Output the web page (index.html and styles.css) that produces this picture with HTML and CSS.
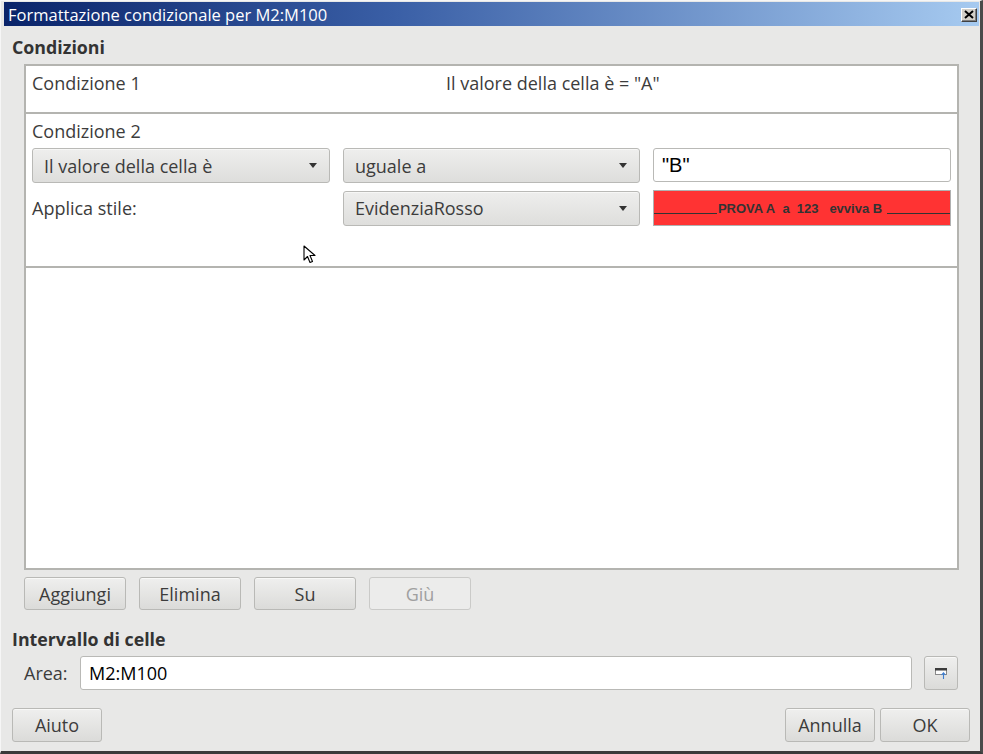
FILE: index.html
```html
<!DOCTYPE html>
<html>
<head>
  <title>Formattazione condizionale per M2:M100</title>
  <link rel="stylesheet" href="styles.css">
</head>
<body>
  <div class="window">
    <div class="titlebar">
      <span class="title">Formattazione condizionale per M2:M100</span>
      <button class="close-btn" aria-label="Chiudi">
        <svg width="10" height="9" viewBox="0 0 10 9">
          <path d="M1 1 L9 8 M9 1 L1 8" stroke="#000" stroke-width="2" fill="none"/>
        </svg>
      </button>
    </div>

    <div class="content">
      <h2 class="section-title">Condizioni</h2>

      <div class="cond-list">
        <div class="cond collapsed">
          <span class="cond-name">Condizione 1</span>
          <span class="cond-summary">Il valore della cella è = "A"</span>
        </div>

        <div class="cond expanded">
          <div class="cond-name">Condizione 2</div>
          <div class="cond-grid">
            <div class="combo"><span>Il valore della cella è</span><i class="arrow"></i></div>
            <div class="combo"><span>uguale a</span><i class="arrow"></i></div>
            <div class="entry entry-value">"B"</div>

            <div class="label">Applica stile:</div>
            <div class="combo"><span>EvidenziaRosso</span><i class="arrow"></i></div>
            <div class="preview">
              <span class="rule"></span>
              <span class="sample">PROVA A&nbsp; a&nbsp; 123 &nbsp; evviva B</span>
              <span class="rule"></span>
            </div>
          </div>
          <svg class="cursor" width="14" height="20" viewBox="0 0 14 20">
            <path d="M1 1 L1 15 L4.5 11.5 L7 17.5 L9.5 16.5 L7 10.5 L12 10.5 Z" fill="#fff" stroke="#000" stroke-width="1.1" stroke-linejoin="round"/>
          </svg>
        </div>
      </div>

      <div class="list-actions">
        <button class="btn">Aggiungi</button>
        <button class="btn">Elimina</button>
        <button class="btn">Su</button>
        <button class="btn" disabled>Giù</button>
      </div>

      <h2 class="section-title range-title">Intervallo di celle</h2>
      <div class="range-row">
        <label class="range-label" for="area">Area:</label>
        <div class="entry entry-area" id="area">M2:M100</div>
        <button class="btn shrink-btn" aria-label="Riduci">
          <svg width="14" height="16" viewBox="0 0 14 16">
            <rect x="1.5" y="3.5" width="11" height="6" fill="#fdfdfd" stroke="#8a8a8a"/>
            <rect x="1" y="3" width="12" height="2.5" fill="#3c3c3c"/>
            <path d="M9.5 14 L9.5 8 M7.5 10 L9.5 7.8 L11.5 10" stroke="#3f7fd0" stroke-width="1.1" fill="none"/>
          </svg>
        </button>
      </div>

      <div class="dialog-actions">
        <button class="btn">Aiuto</button>
        <div class="spacer"></div>
        <button class="btn">Annulla</button>
        <button class="btn">OK</button>
      </div>
    </div>
  </div>
</body>
</html>
```

FILE: styles.css
```css
:root {
  --bg: #e8e8e7;
  --text: #3c3c3c;
  --border: #b9b9b6;
  --list-border: #b4b4b0;
  --ui-font: 'Open Sans', 'Noto Sans', sans-serif;
}

html, body {
  margin: 0;
  padding: 0;
}

body {
  font-family: var(--ui-font);
  font-size: 18px;
  color: var(--text);
  background: #3a3a3a;
}

.window {
  box-sizing: border-box;
  width: 983px;
  height: 754px;
  background: var(--bg);
  border-left: 1px solid #f6f6f6;
  border-top: 1px solid #f6f6f6;
  border-right: 3px solid #4a4a4a;
  border-bottom: 3px solid #3a3a3a;
  padding: 1px 1px 0 3px;
  display: flex;
  flex-direction: column;
}

/* classic window caption */
.titlebar {
  height: 24px;
  display: flex;
  align-items: center;
  justify-content: space-between;
  padding: 0 2px 0 4px;
  background: linear-gradient(to right, #0a246a 0%, #3a5fa6 40%, #a6caf0 100%);
}

.title {
  color: #fff;
  font-size: 16.5px;
}

.close-btn {
  width: 16px;
  height: 14px;
  padding: 0;
  margin-top: 1px;
  display: flex;
  align-items: center;
  justify-content: center;
  background: #d4d0c8;
  border: 1px solid;
  border-color: #fff #404040 #404040 #fff;
  box-shadow: inset -1px -1px 0 #808080;
}

.content {
  flex: 1;
  display: flex;
  flex-direction: column;
  padding: 0 9px 0 8px;
}

.section-title {
  margin: 9px 0 0 0;
  font-size: 17.8px;
  font-weight: bold;
  line-height: 24px;
  color: #333;
}

.cond-list {
  margin: 5px 11px 0 12px;
  height: 502px;
  background: #fff;
  border: 2px solid var(--list-border);
  position: relative;
}

.cond {
  padding: 5px 6px 0 6px;
  border-bottom: 2px solid var(--list-border);
  box-sizing: border-box;
}

.cond-name {
  line-height: 24px;
}

.cond.collapsed {
  height: 48px;
  display: flex;
  align-items: flex-start;
  line-height: 24px;
}

.cond.collapsed .cond-name {
  width: 414px;
}

.cond.expanded {
  height: 154px;
  position: relative;
}

.cond-grid {
  margin-top: 5px;
  display: grid;
  grid-template-columns: 298px 297px 298px;
  column-gap: 13px;
  row-gap: 7px;
  align-items: center;
}

.combo {
  height: 35px;
  box-sizing: border-box;
  padding: 0 11px 0 11px;
  display: flex;
  align-items: center;
  justify-content: space-between;
  border: 1px solid var(--border);
  border-radius: 3px;
  background: linear-gradient(to bottom, #eeeeed, #dededc);
  box-shadow: inset 0 1px 0 #f7f7f6;
}

.arrow {
  width: 0;
  height: 0;
  border-left: 4.5px solid transparent;
  border-right: 4.5px solid transparent;
  border-top: 5px solid #333;
  margin-right: 1px;
}

.entry {
  height: 34px;
  box-sizing: border-box;
  display: flex;
  align-items: center;
  background: #fff;
  border: 1px solid var(--border);
  border-radius: 3px;
  color: #000;
}

.entry-value {
  align-self: start;
  padding-left: 8px;
  font-family: 'Liberation Sans', Arial, sans-serif;
  font-size: 20px;
}

.label {
  line-height: 24px;
}

.preview {
  height: 36px;
  box-sizing: border-box;
  border: 1px solid #b0b0b0;
  background: #ff3333;
  display: flex;
  align-items: center;
  font-family: 'Liberation Sans', Arial, sans-serif;
  font-weight: bold;
  font-size: 13px;
  color: #333;
}

.preview .rule {
  flex: 1;
  height: 1px;
  background: #333;
  margin-top: 10px;
}

.preview .sample {
  padding: 0 5px 0 1px;
  white-space: pre;
}

.cursor {
  position: absolute;
  left: 277px;
  top: 131px;
}

.list-actions {
  margin: 7px 0 0 12px;
  display: flex;
  gap: 13px;
}

.btn {
  height: 33px;
  min-width: 90px;
  box-sizing: border-box;
  padding: 0 12px;
  font-family: var(--ui-font);
  font-size: 18px;
  color: var(--text);
  border: 1px solid var(--border);
  border-radius: 3px;
  background: linear-gradient(to bottom, #efefee, #dbdbd9);
  box-shadow: inset 0 1px 0 #f8f8f7;
}

.list-actions .btn {
  width: 102px;
}

.btn:disabled {
  color: #a0a0a0;
  background: #ececeb;
  border-color: #cacac8;
  box-shadow: none;
}

.range-title {
  margin-top: 17px;
}

.range-row {
  margin: 5px 12px 0 12px;
  display: flex;
  align-items: center;
}

.range-label {
  width: 56px;
  line-height: 24px;
}

.entry-area {
  flex: 1;
  padding-left: 8px;
  font-size: 18px;
}

.shrink-btn {
  width: 34px;
  min-width: 34px;
  height: 34px;
  margin-left: 12px;
  padding: 0;
  display: flex;
  align-items: center;
  justify-content: center;
}

.dialog-actions {
  margin-top: 18px;
  display: flex;
  gap: 5px;
}

.dialog-actions .btn {
  width: 90px;
  height: 34px;
}

.spacer {
  flex: 1;
}
```
